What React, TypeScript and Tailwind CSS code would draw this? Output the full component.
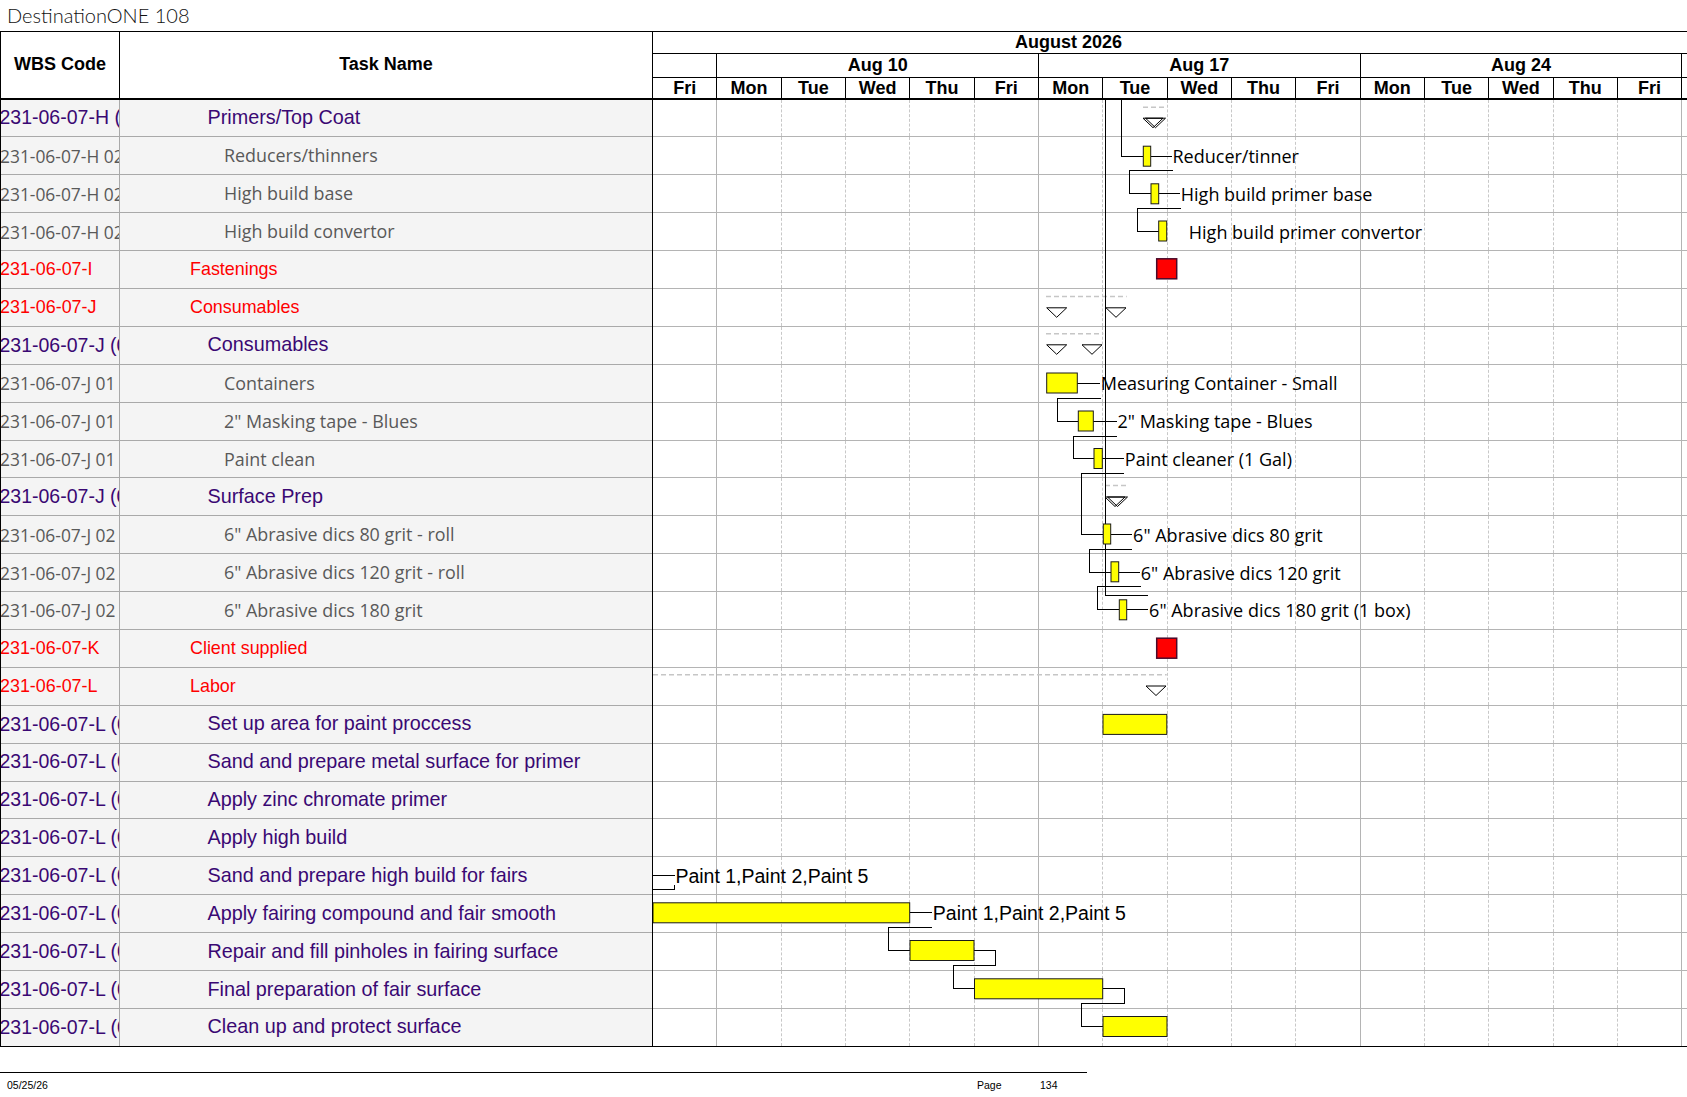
import React from 'react';

// 日幅と行高（スクリーンショットから計測）
const W = 64.34;

const DAYS = ['Fri', 'Mon', 'Tue', 'Wed', 'Thu', 'Fri', 'Mon', 'Tue', 'Wed', 'Thu', 'Fri', 'Mon', 'Tue', 'Wed', 'Thu', 'Fri'];

type Kind = 'grp' | 'sum' | 'task';

const ROWS: { wbs: string; name: string; kind: Kind }[] = [
  { wbs: '231-06-07-H (02)', name: 'Primers/Top Coat', kind: 'sum' },
  { wbs: '231-06-07-H 02 01', name: 'Reducers/thinners', kind: 'task' },
  { wbs: '231-06-07-H 02 02', name: 'High build base', kind: 'task' },
  { wbs: '231-06-07-H 02 03', name: 'High build convertor', kind: 'task' },
  { wbs: '231-06-07-I', name: 'Fastenings', kind: 'grp' },
  { wbs: '231-06-07-J', name: 'Consumables', kind: 'grp' },
  { wbs: '231-06-07-J (01)', name: 'Consumables', kind: 'sum' },
  { wbs: '231-06-07-J 01 01', name: 'Containers', kind: 'task' },
  { wbs: '231-06-07-J 01 02', name: '2" Masking tape - Blues', kind: 'task' },
  { wbs: '231-06-07-J 01 03', name: 'Paint clean', kind: 'task' },
  { wbs: '231-06-07-J (02)', name: 'Surface Prep', kind: 'sum' },
  { wbs: '231-06-07-J 02 01', name: '6" Abrasive dics 80 grit - roll', kind: 'task' },
  { wbs: '231-06-07-J 02 02', name: '6" Abrasive dics 120 grit - roll', kind: 'task' },
  { wbs: '231-06-07-J 02 03', name: '6" Abrasive dics 180 grit', kind: 'task' },
  { wbs: '231-06-07-K', name: 'Client supplied', kind: 'grp' },
  { wbs: '231-06-07-L', name: 'Labor', kind: 'grp' },
  { wbs: '231-06-07-L (01)', name: 'Set up area for paint proccess', kind: 'sum' },
  { wbs: '231-06-07-L (02)', name: 'Sand and prepare metal surface for primer', kind: 'sum' },
  { wbs: '231-06-07-L (03)', name: 'Apply zinc chromate primer', kind: 'sum' },
  { wbs: '231-06-07-L (04)', name: 'Apply high build', kind: 'sum' },
  { wbs: '231-06-07-L (05)', name: 'Sand and prepare high build for fairs', kind: 'sum' },
  { wbs: '231-06-07-L (06)', name: 'Apply fairing compound and fair smooth', kind: 'sum' },
  { wbs: '231-06-07-L (07)', name: 'Repair and fill pinholes in fairing surface', kind: 'sum' },
  { wbs: '231-06-07-L (08)', name: 'Final preparation of fair surface', kind: 'sum' },
  { wbs: '231-06-07-L (09)', name: 'Clean up and protect surface', kind: 'sum' },
];

// バー（x1, x2, 中心y）
const BARS: [number, number, number][] = [
  [1143.3, 1150.7, 155.7],
  [1151, 1158.7, 193.3],
  [1158.7, 1166.7, 230.5],
  [1046.7, 1077.3, 382.5],
  [1078.3, 1093.3, 420.5],
  [1094, 1102.3, 458],
  [1103.3, 1110.7, 533.5],
  [1111, 1118.7, 571.3],
  [1119.3, 1126.7, 609.3],
  [1103, 1166.8, 723.9],
  [653, 909.7, 912.3],
  [910, 974, 950],
  [974.5, 1102.7, 988.3],
  [1103, 1167, 1026],
];

const MILESTONES: [number, number][] = [
  [1156.7, 258.3],
  [1156.7, 637.7],
];

// サマリーの破線 (x1, x2, y)
const DASHES: [number, number, number][] = [
  [1143, 1167, 106.7],
  [1046, 1126.7, 296],
  [1046, 1103.3, 333.3],
  [1105, 1127.3, 485],
  [653, 1166.7, 674.3],
];

// 三角マーカー (左x, 上y, 二重線)
const TRIS: [number, number, boolean][] = [
  [1143, 117.7, true],
  [1046.7, 307.3, false],
  [1106, 307.3, false],
  [1046.7, 344.3, false],
  [1082, 344.3, false],
  [1105, 496.5, true],
  [1146, 685.5, false],
];

const LINKS = [
  '1121,99.5 1121,155.7 1143,155.7',
  '1105,99.5 1105,595 1148.3,595',
  '1172.7,170 1129,170 1129,193.3 1151,193.3',
  '1181,207.7 1137.3,207.7 1137.3,231 1158.7,231',
  '1101,397.7 1057.3,397.7 1057.3,420.7 1078.3,420.7',
  '1116.7,435.7 1073.3,435.7 1073.3,458.3 1094,458.3',
  '1124,473.3 1081,473.3 1081,534 1103.3,534',
  '1132.3,549.3 1089.3,549.3 1089.3,572.3 1111,572.3',
  '1140.7,586.3 1097.7,586.3 1097.7,609.3 1119.3,609.3',
  '653,889 674.6,889 674.6,884',
  '932,927.3 888.2,927.3 888.2,950 910,950',
  '974,950 995.4,950 995.4,965.3 953.2,965.3 953.2,988.3 974.5,988.3',
  '1102.7,988.3 1124.6,988.3 1124.6,1003.3 1081.8,1003.3 1081.8,1026 1103,1026',
];

const LABELS: { x1?: number; x2: number; y: number; text: string; arial?: boolean }[] = [
  { x1: 1150.7, x2: 1171.7, y: 155.7, text: 'Reducer/tinner' },
  { x1: 1158.7, x2: 1180, y: 193.3, text: 'High build primer base' },
  { x2: 1188, y: 231, text: 'High build primer convertor' },
  { x1: 1077.3, x2: 1100, y: 382.7, text: 'Measuring Container - Small' },
  { x1: 1093.3, x2: 1116.7, y: 420.7, text: '2" Masking tape - Blues' },
  { x1: 1102.3, x2: 1124, y: 458.3, text: 'Paint cleaner (1 Gal)' },
  { x1: 1110.7, x2: 1132.3, y: 534, text: '6" Abrasive dics 80 grit' },
  { x1: 1118.7, x2: 1140, y: 572.3, text: '6" Abrasive dics 120 grit' },
  { x1: 1126.7, x2: 1148.3, y: 609.3, text: '6" Abrasive dics 180 grit (1 box)' },
  { x1: 653, x2: 674.6, y: 875, text: 'Paint 1,Paint 2,Paint 5', arial: true },
  { x1: 909.7, x2: 932, y: 912.3, text: 'Paint 1,Paint 2,Paint 5', arial: true },
];

function Triangle({ x, y, double }: { x: number; y: number; double: boolean }) {
  const pts = (dx: number) => `${x + dx},${y} ${x + dx + 20},${y} ${x + dx + 10},${y + 9.5}`;
  return (
    <g>
      {double && <polygon points={pts(2.5)} fill="white" stroke="black" strokeWidth={1} />}
      <polygon points={pts(0)} fill={double ? 'none' : 'white'} stroke="black" strokeWidth={1} />
    </g>
  );
}

function GanttOverlay() {
  return (
    <svg
      className="absolute left-0 top-0 w-[1034px] h-[947.5px] pointer-events-none"
      viewBox="653 99.5 1034 947.5"
    >
      {DASHES.map(([x1, x2, y], i) => (
        <line key={i} x1={x1} x2={x2} y1={y} y2={y} stroke="#c6c6c6" strokeWidth={1.5} strokeDasharray="5 3" />
      ))}
      {LINKS.map((p, i) => (
        <polyline key={i} points={p} fill="none" stroke="black" strokeWidth={1} shapeRendering="crispEdges" />
      ))}
      {LABELS.map((l, i) => (
        <g key={i}>
          {l.x1 !== undefined && (
            <line x1={l.x1} x2={l.x2} y1={l.y} y2={l.y} stroke="black" strokeWidth={1} shapeRendering="crispEdges" />
          )}
          <text
            x={l.x2 + 0.8}
            y={l.y}
            dominantBaseline="central"
            fontFamily={l.arial ? "'Liberation Sans', Arial, sans-serif" : "'Open Sans', sans-serif"}
            fontSize={l.arial ? 19.5 : 18}
            fill="black"
          >
            {l.text}
          </text>
        </g>
      ))}
      {BARS.map(([x1, x2, y], i) => (
        <rect key={i} x={x1} y={y - 10} width={x2 - x1} height={20} fill="#ffff00" stroke="#1a1a1a" strokeWidth={1} />
      ))}
      {MILESTONES.map(([x, y], i) => (
        <rect key={i} x={x} y={y} width={20} height={20} fill="#ff0000" stroke="#4a0a2a" strokeWidth={1.5} />
      ))}
      {TRIS.map(([x, y, d], i) => (
        <Triangle key={i} x={x} y={y} double={d} />
      ))}
    </svg>
  );
}

function rowText(kind: Kind) {
  if (kind === 'grp') return "text-[#ff0000] text-[17.9px] font-['Liberation_Sans',Arial,sans-serif]";
  if (kind === 'sum') return "text-[#3a0873] text-[19.8px] font-['Liberation_Sans',Arial,sans-serif]";
  return "text-[#595959] text-[17.9px] font-['Open_Sans',sans-serif]";
}

function wbsText(kind: Kind) {
  if (kind === 'task') return 'text-[17.4px] -ml-[1px]';
  if (kind === 'sum') return 'text-[19.5px] -ml-[1.5px]';
  return '-ml-[1px]';
}

function namePad(kind: Kind) {
  if (kind === 'grp') return 'pl-[70px]';
  if (kind === 'sum') return 'pl-[87.5px]';
  return 'pl-[104px]';
}

export default function App() {
  return (
    <div className="w-[1687px] h-[1097px] overflow-hidden bg-white text-black font-['Liberation_Sans',Arial,sans-serif]">
      {/* タイトル */}
      <div className="h-[31px] pl-[7px] pt-[2px] text-[20px] leading-[26px] font-light text-[#111] font-['Lato',sans-serif]">
        DestinationONE 108
      </div>

      {/* テーブル + ガント */}
      <div className="flex border-t border-black">
        {/* 左側テーブル */}
        <div className="w-[652px] shrink-0 border-l border-black">
          <div className="flex h-[67.5px] border-b-2 border-black text-[18px] font-bold">
            <div className="w-[119px] shrink-0 border-r border-black flex items-center justify-center">WBS Code</div>
            <div className="flex-1 flex items-center justify-center">Task Name</div>
          </div>
          {ROWS.map((r, i) => (
            <div
              key={i}
              className={`flex h-[37.9px] bg-[#f4f4f4] border-b ${i === ROWS.length - 1 ? 'border-black' : 'border-[#a9a9a9]'} ${rowText(r.kind)}`}
            >
              <div className="w-[119px] shrink-0 border-r border-[#a9a9a9] overflow-hidden whitespace-nowrap flex items-center">
                <span className={wbsText(r.kind)}>{r.wbs}</span>
              </div>
              <div className={`flex-1 flex items-center whitespace-nowrap ${namePad(r.kind)}`}>{r.name}</div>
            </div>
          ))}
        </div>

        {/* ガントチャート */}
        <div className="w-[1035px] shrink-0 border-l border-black flex flex-col">
          <div className="h-[22px] border-b border-black text-[18px] font-bold leading-[21px] pl-[362px]">
            August 2026
          </div>
          <div className="flex h-[23.5px] border-b border-black text-[18px] font-bold leading-[22.5px]">
            <div className="w-[64.34px] shrink-0 border-r border-black" />
            {['Aug 10', 'Aug 17', 'Aug 24'].map((w) => (
              <div key={w} className="w-[321.7px] shrink-0 border-r border-black text-center">
                {w}
              </div>
            ))}
            <div className="flex-1" />
          </div>
          <div className="flex h-[22px] border-b-2 border-black text-[18px] font-bold leading-[20px]">
            {DAYS.map((d, k) => (
              <div key={k} className="w-[64.34px] shrink-0 border-r border-black text-center">
                {d}
              </div>
            ))}
            <div className="flex-1" />
          </div>

          <div className="relative">
            {ROWS.map((_, i) => (
              <div
                key={i}
                className={`flex h-[37.9px] border-b ${i === ROWS.length - 1 ? 'border-black' : 'border-[#b4b4b4]'}`}
              >
                {DAYS.map((_, k) =>
                  k % 5 === 0 ? (
                    <div key={k} className="w-[64.34px] shrink-0 border-r border-solid border-[#b4b4b4]" />
                  ) : (
                    <div key={k} className="w-[64.34px] shrink-0 border-r border-dashed border-[#c8c8c8]" />
                  )
                )}
                <div className="flex-1" />
              </div>
            ))}
            <GanttOverlay />
          </div>
        </div>
      </div>

      {/* フッター */}
      <div className="mt-[25px] w-[1087px] border-t border-black" />
      <div className="flex pt-[5px] text-[10.5px] leading-[14px]">
        <span className="w-[977px] pl-[7px]">05/25/26</span>
        <span className="w-[63px]">Page</span>
        <span>134</span>
      </div>
    </div>
  );
}
